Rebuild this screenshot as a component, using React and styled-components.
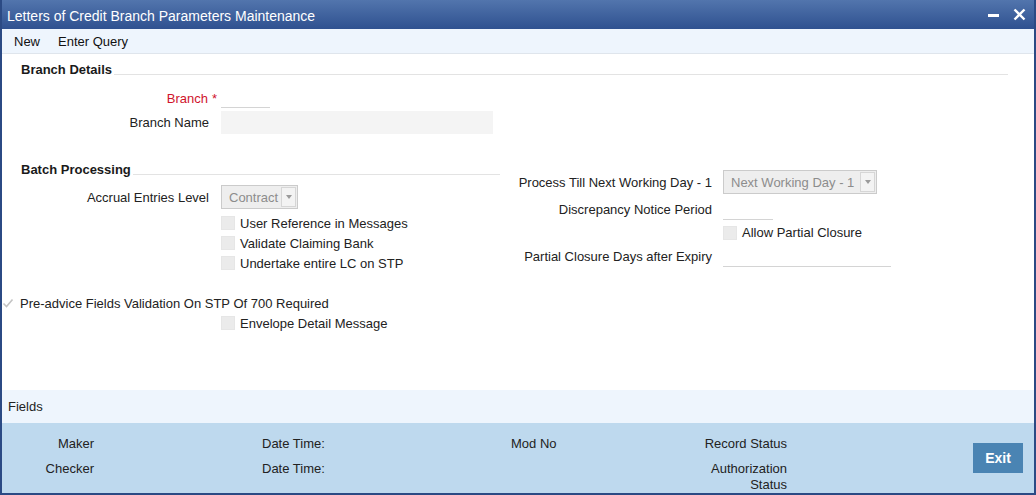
import React from "react";
import styled, { createGlobalStyle } from "styled-components";

const Global = createGlobalStyle`
  html, body { margin: 0; padding: 0; background: #fff; }
  body { font-family: "Liberation Sans", Arial, sans-serif; font-size: 13px; color: #222; }
  * { box-sizing: border-box; }
`;

const Window = styled.div`
  width: 1036px;
  height: 495px;
  display: flex;
  flex-direction: column;
  border: 2px solid #2b4a84;
  border-top: none;
  background: #fff;
`;

const TitleBar = styled.div`
  height: 29px;
  flex: none;
  display: flex;
  align-items: center;
  padding: 0 8px 0 5px;
  background: linear-gradient(#5275ad, #2f5190);
  color: #fff;
  font-size: 14px;
`;

const Title = styled.div`
  flex: 1;
  padding-top: 2px;
`;

const TitleIcons = styled.div`
  display: flex;
  align-items: center;
  gap: 14px;
`;

const Toolbar = styled.div`
  height: 25px;
  flex: none;
  display: flex;
  align-items: center;
  gap: 18px;
  padding-left: 12px;
  background: #eef5fd;
  border-bottom: 1px solid #dfe5ec;
`;

const ToolItem = styled.span`
  font-size: 13px;
  color: #111;
`;

const Body = styled.div`
  flex: 1;
  display: flex;
  flex-direction: column;
  padding-top: 8px;
`;

const SectionHeader = styled.div`
  display: flex;
  align-items: flex-end;
  padding-left: 19px;
  padding-right: ${(p) => p.$right || 0}px;
  height: 16px;
  line-height: 16px;
`;

const SectionTitle = styled.span`
  font-weight: bold;
  font-size: 13px;
  color: #1a1a1a;
  white-space: nowrap;
`;

const SectionLine = styled.span`
  flex: 1;
  border-bottom: 1px solid #e3e3e3;
  margin: 0 0 3px 2px;
`;

const FormRow = styled.div`
  display: grid;
  grid-template-columns: ${(p) => p.$label}px auto;
  column-gap: ${(p) => p.$gap || 12}px;
  align-items: center;
  height: ${(p) => p.$h || 20}px;
  margin-top: ${(p) => p.$mt || 0}px;
`;

const Label = styled.span`
  text-align: right;
  white-space: nowrap;
  color: ${(p) => (p.$required ? "#d0142c" : "#222")};
  margin-right: ${(p) => (p.$required ? -8 : 0)}px;
`;

const Star = styled.span`
  margin-left: 4px;
`;

const LineInput = styled.div`
  width: ${(p) => p.$w}px;
  height: 100%;
  border-bottom: 1px solid #d4d4d4;
`;

const FilledInput = styled.div`
  width: ${(p) => p.$w}px;
  height: 100%;
  background: #f4f4f4;
`;

const Select = styled.div`
  width: ${(p) => p.$w}px;
  height: 24px;
  display: flex;
  align-items: stretch;
  border: 1px solid #cbcbcb;
  background: #eeeeee;
`;

const SelectText = styled.span`
  flex: 1;
  padding-left: 7px;
  display: flex;
  align-items: center;
  color: #8c8c8c;
  white-space: nowrap;
  overflow: hidden;
`;

const SelectArrow = styled.span`
  width: 15px;
  margin: 1px;
  border: 1px solid #d6d6d6;
  background: #f3f3f3;
  display: flex;
  align-items: center;
  justify-content: center;
  &::after {
    content: "";
    border-left: 3.5px solid transparent;
    border-right: 3.5px solid transparent;
    border-top: 4px solid #9a9a9a;
  }
`;

const Columns = styled.div`
  display: flex;
  margin-top: 28px;
`;

const LeftCol = styled.div`
  width: 500px;
  display: flex;
  flex-direction: column;
`;

const RightCol = styled.div`
  flex: 1;
  display: flex;
  flex-direction: column;
  padding-top: 8px;
`;

const CheckRow = styled.div`
  display: flex;
  align-items: center;
  gap: 5px;
  height: ${(p) => p.$h || 20}px;
  padding-left: ${(p) => p.$indent}px;
  margin-top: ${(p) => p.$mt || 0}px;
  white-space: nowrap;
`;

const Box = styled.span`
  width: 14px;
  height: 14px;
  flex: none;
  background: #ebebeb;
  border: 1px solid #e6e6e6;
`;

const Tick = styled.svg`
  width: 12px;
  height: 12px;
  flex: none;
  margin-right: 1px;
`;

const FieldsBar = styled.div`
  height: 33px;
  flex: none;
  display: flex;
  align-items: center;
  padding-left: 6px;
  background: #eef5fd;
`;

const Footer = styled.div`
  height: 70px;
  flex: none;
  display: flex;
  align-items: flex-start;
  padding: 13px 11px 0 0;
  background: #bed9ee;
`;

const FooterCol = styled.div`
  width: ${(p) => p.$w}px;
  margin-left: ${(p) => p.$ml || 0}px;
  display: flex;
  flex-direction: column;
  gap: 9px;
  text-align: ${(p) => p.$align || "left"};
  line-height: 16px;
`;

const ExitButton = styled.button`
  margin-left: auto;
  margin-top: 7px;
  width: 50px;
  height: 30px;
  border: none;
  background: #4a84b3;
  color: #fff;
  font-family: "Liberation Sans", Arial, sans-serif;
  font-weight: bold;
  font-size: 14px;
  padding: 0;
`;

function Checkbox({ label, indent = 219, mt, h }) {
  return (
    <CheckRow $indent={indent} $mt={mt} $h={h}>
      <Box />
      <span>{label}</span>
    </CheckRow>
  );
}

export default function App() {
  return (
    <>
      <Global />
      <Window>
        <TitleBar>
          <Title>Letters of Credit Branch Parameters Maintenance</Title>
          <TitleIcons>
            <svg width="11" height="12" viewBox="0 0 11 12">
              <rect x="0" y="5" width="11" height="3" fill="#fff" />
            </svg>
            <svg width="13" height="13" viewBox="0 0 13 13">
              <path d="M1.5 1.5 L11.5 11.5 M11.5 1.5 L1.5 11.5" stroke="#fff" strokeWidth="2.4" />
            </svg>
          </TitleIcons>
        </TitleBar>
        <Toolbar>
          <ToolItem>New</ToolItem>
          <ToolItem>Enter Query</ToolItem>
        </Toolbar>
        <Body>
          <SectionHeader $right={26}>
            <SectionTitle>Branch Details</SectionTitle>
            <SectionLine />
          </SectionHeader>
          <FormRow $label={207} $mt={10}>
            <Label $required>
              Branch<Star>*</Star>
            </Label>
            <LineInput $w={49} />
          </FormRow>
          <FormRow $label={207} $h={23} $mt={3}>
            <Label>Branch Name</Label>
            <FilledInput $w={272} />
          </FormRow>
          <Columns>
            <LeftCol>
              <SectionHeader $right={2}>
                <SectionTitle>Batch Processing</SectionTitle>
                <SectionLine />
              </SectionHeader>
              <FormRow $label={207} $h={24} $mt={7}>
                <Label>Accrual Entries Level</Label>
                <Select $w={77}>
                  <SelectText>Contract</SelectText>
                  <SelectArrow />
                </Select>
              </FormRow>
              <Checkbox label="User Reference in Messages" mt={4} />
              <Checkbox label="Validate Claiming Bank" />
              <Checkbox label="Undertake entire LC on STP" />
              <CheckRow $indent={0} $mt={20}>
                <Tick viewBox="0 0 12 12">
                  <path d="M1.5 6.5 L4.5 9.5 L10.5 2.5" fill="none" stroke="#c4c4c4" strokeWidth="1.6" />
                </Tick>
                <span>Pre-advice Fields Validation On STP Of 700 Required</span>
              </CheckRow>
              <Checkbox label="Envelope Detail Message" />
            </LeftCol>
            <RightCol>
              <FormRow $label={210} $gap={11} $h={24}>
                <Label>Process Till Next Working Day - 1</Label>
                <Select $w={154}>
                  <SelectText>Next Working Day - 1</SelectText>
                  <SelectArrow />
                </Select>
              </FormRow>
              <FormRow $label={210} $gap={11} $h={22} $mt={4}>
                <Label>Discrepancy Notice Period</Label>
                <LineInput $w={50} />
              </FormRow>
              <Checkbox label="Allow Partial Closure" indent={221} h={25} />
              <FormRow $label={210} $gap={11} $h={22}>
                <Label>Partial Closure Days after Expiry</Label>
                <LineInput $w={168} />
              </FormRow>
            </RightCol>
          </Columns>
        </Body>
        <FieldsBar>Fields</FieldsBar>
        <Footer>
          <FooterCol $w={92} $align="right">
            <span>Maker</span>
            <span>Checker</span>
          </FooterCol>
          <FooterCol $w={249} $ml={168}>
            <span>Date Time:</span>
            <span>Date Time:</span>
          </FooterCol>
          <FooterCol $w={191}>
            <span>Mod No</span>
          </FooterCol>
          <FooterCol $w={85} $align="right">
            <span>Record Status</span>
            <span>Authorization Status</span>
          </FooterCol>
          <ExitButton>Exit</ExitButton>
        </Footer>
      </Window>
    </>
  );
}
